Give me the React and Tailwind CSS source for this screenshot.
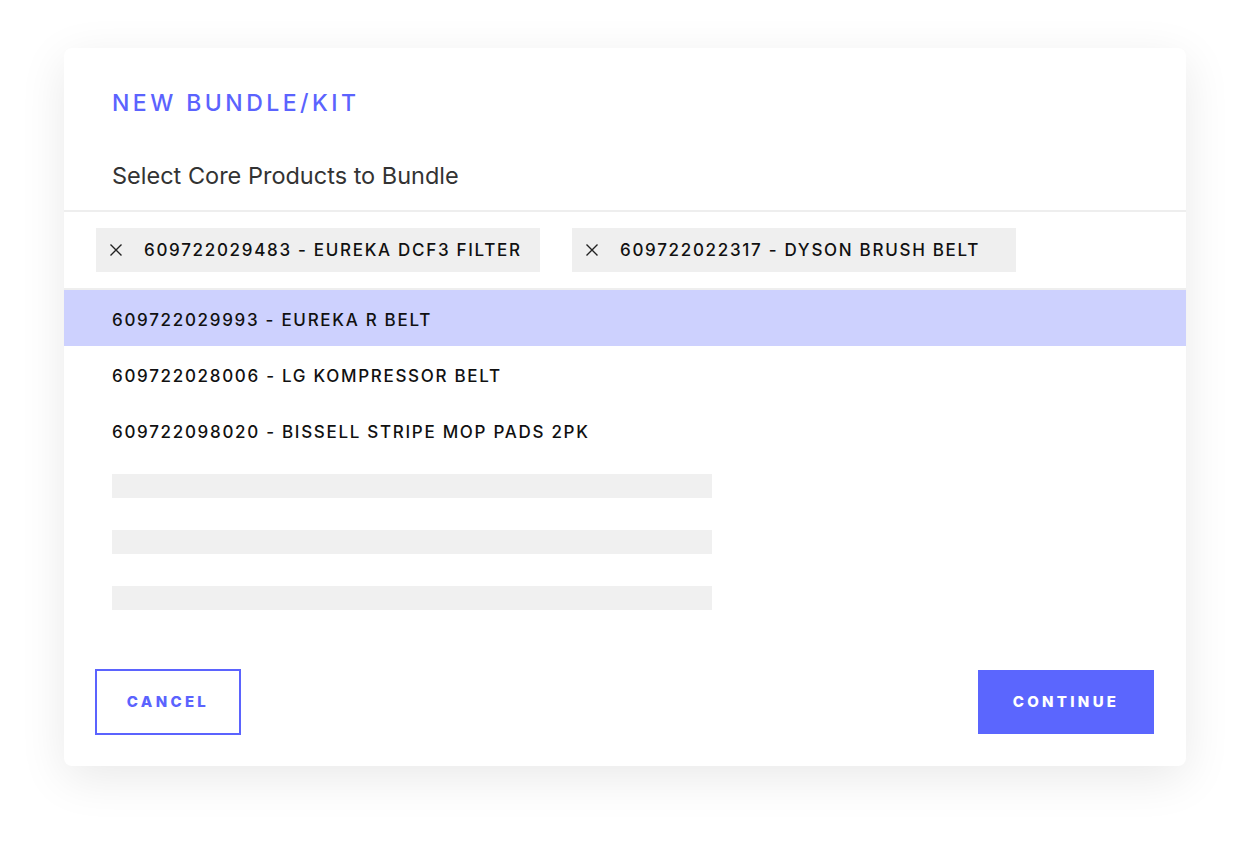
import React, { useState } from "react";

const selected = [
    { id: "609722029483", name: "EUREKA DCF3 FILTER" },
    { id: "609722022317", name: "DYSON BRUSH BELT" },
];

const options = [
    { id: "609722029993", name: "EUREKA R BELT" },
    { id: "609722028006", name: "LG KOMPRESSOR BELT" },
    { id: "609722098020", name: "BISSELL STRIPE MOP PADS 2PK" },
];

const XIcon = () => (
    <svg width="14" height="14" viewBox="0 0 14 14" fill="none">
        <path d="M1.5 1.5L12.5 12.5M12.5 1.5L1.5 12.5" stroke="#222" strokeWidth="1.4" />
    </svg>
);

const App = () => {
    const [active] = useState(0);

    return (
        <div
            className="min-h-[846px] w-full bg-white pt-[48px] pl-[64px]"
            style={{ fontFamily: "Inter, 'Noto Sans', sans-serif" }}
        >
            <div className="w-[1122px] h-[718px] bg-white rounded-lg shadow-[0_12px_48px_rgba(0,0,0,0.09)] flex flex-col">
                {/* header */}
                <div className="px-[48px] pt-[41px] h-[164px] border-b-2 border-[#eeeeee]">
                    <h1 className="text-[23px] leading-[28px] font-medium tracking-[0.15em] text-[#5b63fe]">
                        NEW BUNDLE/KIT
                    </h1>
                    <p className="mt-[45px] text-[23.5px] leading-[28px] text-[#333333]">
                        Select Core Products to Bundle
                    </p>
                </div>

                {/* chips */}
                <div className="flex gap-[32px] px-[32px] py-[16px] border-b-2 border-[#eeeeee]">
                    {selected.map((p) => (
                        <div
                            key={p.id}
                            className="w-[444px] h-[44px] bg-[#efefef] flex items-center pl-[13px] gap-[21px]"
                        >
                            <XIcon />
                            <span className="pt-[2px] text-[17px] font-medium tracking-[0.1em] text-[#111111]">
                                {p.id} - {p.name}
                            </span>
                        </div>
                    ))}
                </div>

                {/* list */}
                <ul className="flex flex-col">
                    {options.map((p, i) => (
                        <li
                            key={p.id}
                            className={
                                "h-[56px] flex items-center px-[48px] pt-[6px] text-[17px] font-medium tracking-[0.1em] text-[#111111] " +
                                (i === active ? "bg-[#cdd1fe]" : "")
                            }
                        >
                            {p.id} - {p.name}
                        </li>
                    ))}
                    {[0, 1, 2].map((i) => (
                        <li key={i} className="h-[56px] flex items-center px-[48px]">
                            <div className="w-[600px] h-[24px] bg-[#f0f0f0]" />
                        </li>
                    ))}
                </ul>

                {/* actions */}
                <div className="mt-auto flex justify-between items-end px-[31px] pb-[31px]">
                    <button className="w-[146px] h-[66px] border-2 border-[#5b63fe] text-[#5b63fe] text-[15px] font-extrabold tracking-[0.22em]">
                        CANCEL
                    </button>
                    <button className="w-[176px] h-[64px] mb-px mr-px bg-[#5b66fe] text-white text-[15px] font-extrabold tracking-[0.22em]">
                        CONTINUE
                    </button>
                </div>
            </div>
        </div>
    );
};

export default App;
